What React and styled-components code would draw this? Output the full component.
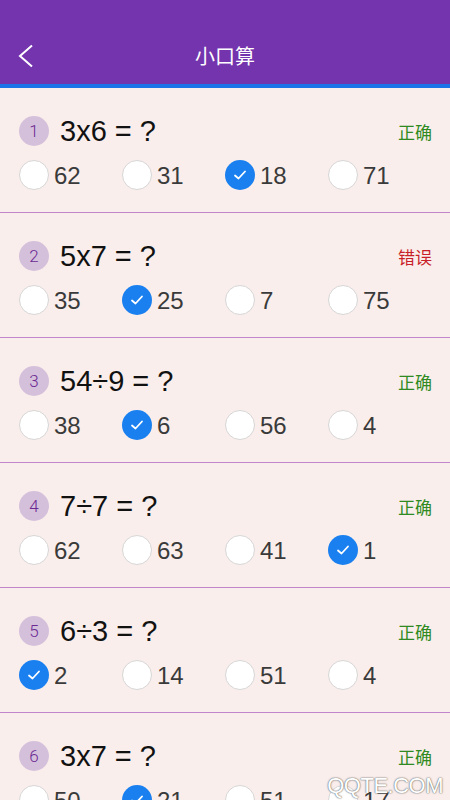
import React from 'react'
import styled, { createGlobalStyle } from 'styled-components'

const GlobalStyle = createGlobalStyle`
    html, body {
        margin: 0;
        padding: 0;
        overflow: hidden;
        background-color: #f9eeeb;
        font-family: "Liberation Sans", "Noto Sans CJK SC", sans-serif;
    }
`;

const Page = styled.div`
    position: relative;
    width: 450px;
    height: 800px;
    overflow: hidden;
    background-color: #f9eeeb;
`;

const Header = styled.header`
    height: 55px;
    padding-top: 14px;
    padding-bottom: 15px;
    background-color: #7434ae;
    border-bottom: 4px solid #1b74e8;
    display: grid;
    grid-template-columns: 60px 1fr 60px;
    align-items: end;
`;

const BackButton = styled.div`
    display: flex;
    align-items: center;
    padding-left: 18px;
    height: 26px;
`;

const Title = styled.h1`
    margin: 0;
    text-align: center;
    color: #ffffff;
    font-family: "Noto Sans CJK SC", sans-serif;
    font-weight: 400;
    font-size: 20px;
    line-height: 26px;
`;

const Item = styled.div`
    padding: 28px 19px 22px;
    border-bottom: 1px solid #c185cb;
`;

const QuestionRow = styled.div`
    display: flex;
    align-items: center;
    height: 30px;
`;

const NumberBadge = styled.span`
    width: 30px;
    height: 30px;
    border-radius: 50%;
    background-color: #d5c0dc;
    color: #6b2a92;
    font-family: "Roboto", sans-serif;
    font-weight: 300;
    font-size: 17px;
    display: flex;
    align-items: center;
    justify-content: center;
    flex-shrink: 0;
`;

const Question = styled.span`
    margin-left: 11px;
    font-size: 29px;
    color: #111111;
    flex: 1;
    line-height: 30px;
`;

const Status = styled.span`
    font-family: "Noto Sans CJK SC", sans-serif;
    font-size: 17px;
    color: ${props => props.correct ? "#2f8a22" : "#c81e28"};
    margin-right: -1px;
`;

const Options = styled.div`
    display: grid;
    grid-template-columns: repeat(4, 1fr);
    margin-top: 14px;
`;

const Option = styled.div`
    display: flex;
    align-items: center;
    gap: 5px;
    height: 30px;
`;

const Radio = styled.span`
    width: 30px;
    height: 30px;
    border-radius: 50%;
    box-sizing: border-box;
    background-color: ${props => props.checked ? "#1a80f0" : "#ffffff"};
    border: ${props => props.checked ? "none" : "1px solid #d6d6d6"};
    display: flex;
    align-items: center;
    justify-content: center;
    flex-shrink: 0;
`;

const OptionText = styled.span`
    font-size: 24px;
    color: #3a3a3a;
    line-height: 30px;
    padding-top: 2px;
`;

const Watermark = styled.div`
    position: absolute;
    right: 7px;
    bottom: 1px;
    font-family: "Liberation Sans", sans-serif;
    font-size: 22px;
    letter-spacing: -0.5px;
    color: #ffffff;
    text-shadow: 0 0 2px #777777, 0 0 1px #555555;
`;

const questions = [
    { q: "3x6 = ?", correct: true, options: ["62", "31", "18", "71"], checked: 2 },
    { q: "5x7 = ?", correct: false, options: ["35", "25", "7", "75"], checked: 1 },
    { q: "54÷9 = ?", correct: true, options: ["38", "6", "56", "4"], checked: 1 },
    { q: "7÷7 = ?", correct: true, options: ["62", "63", "41", "1"], checked: 3 },
    { q: "6÷3 = ?", correct: true, options: ["2", "14", "51", "4"], checked: 0 },
    { q: "3x7 = ?", correct: true, options: ["50", "21", "51", "17"], checked: 1 },
];

const Check = () => (
    <svg width="16" height="16" viewBox="0 0 16 16">
        <polyline points="3,8.5 6.5,11.5 13,4.5" fill="none" stroke="#ffffff" strokeWidth="1.8" strokeLinecap="round" strokeLinejoin="round" />
    </svg>
)

export default function App() {
    return (
        <Page>
            <GlobalStyle />
            <Header>
                <BackButton>
                    <svg width="16" height="24" viewBox="0 0 16 24">
                        <polyline points="14,1.5 2,12 14,22.5" fill="none" stroke="#ffffff" strokeWidth="2" />
                    </svg>
                </BackButton>
                <Title>小口算</Title>
                <div />
            </Header>
            {questions.map((elt, i) => (
                <Item key={i}>
                    <QuestionRow>
                        <NumberBadge>{i + 1}</NumberBadge>
                        <Question>{elt.q}</Question>
                        <Status correct={elt.correct}>{elt.correct ? "正确" : "错误"}</Status>
                    </QuestionRow>
                    <Options>
                        {elt.options.map((opt, j) => (
                            <Option key={j}>
                                <Radio checked={j === elt.checked}>
                                    {j === elt.checked && <Check />}
                                </Radio>
                                <OptionText>{opt}</OptionText>
                            </Option>
                        ))}
                    </Options>
                </Item>
            ))}
            <Watermark>QQTE.COM</Watermark>
        </Page>
    )
}
